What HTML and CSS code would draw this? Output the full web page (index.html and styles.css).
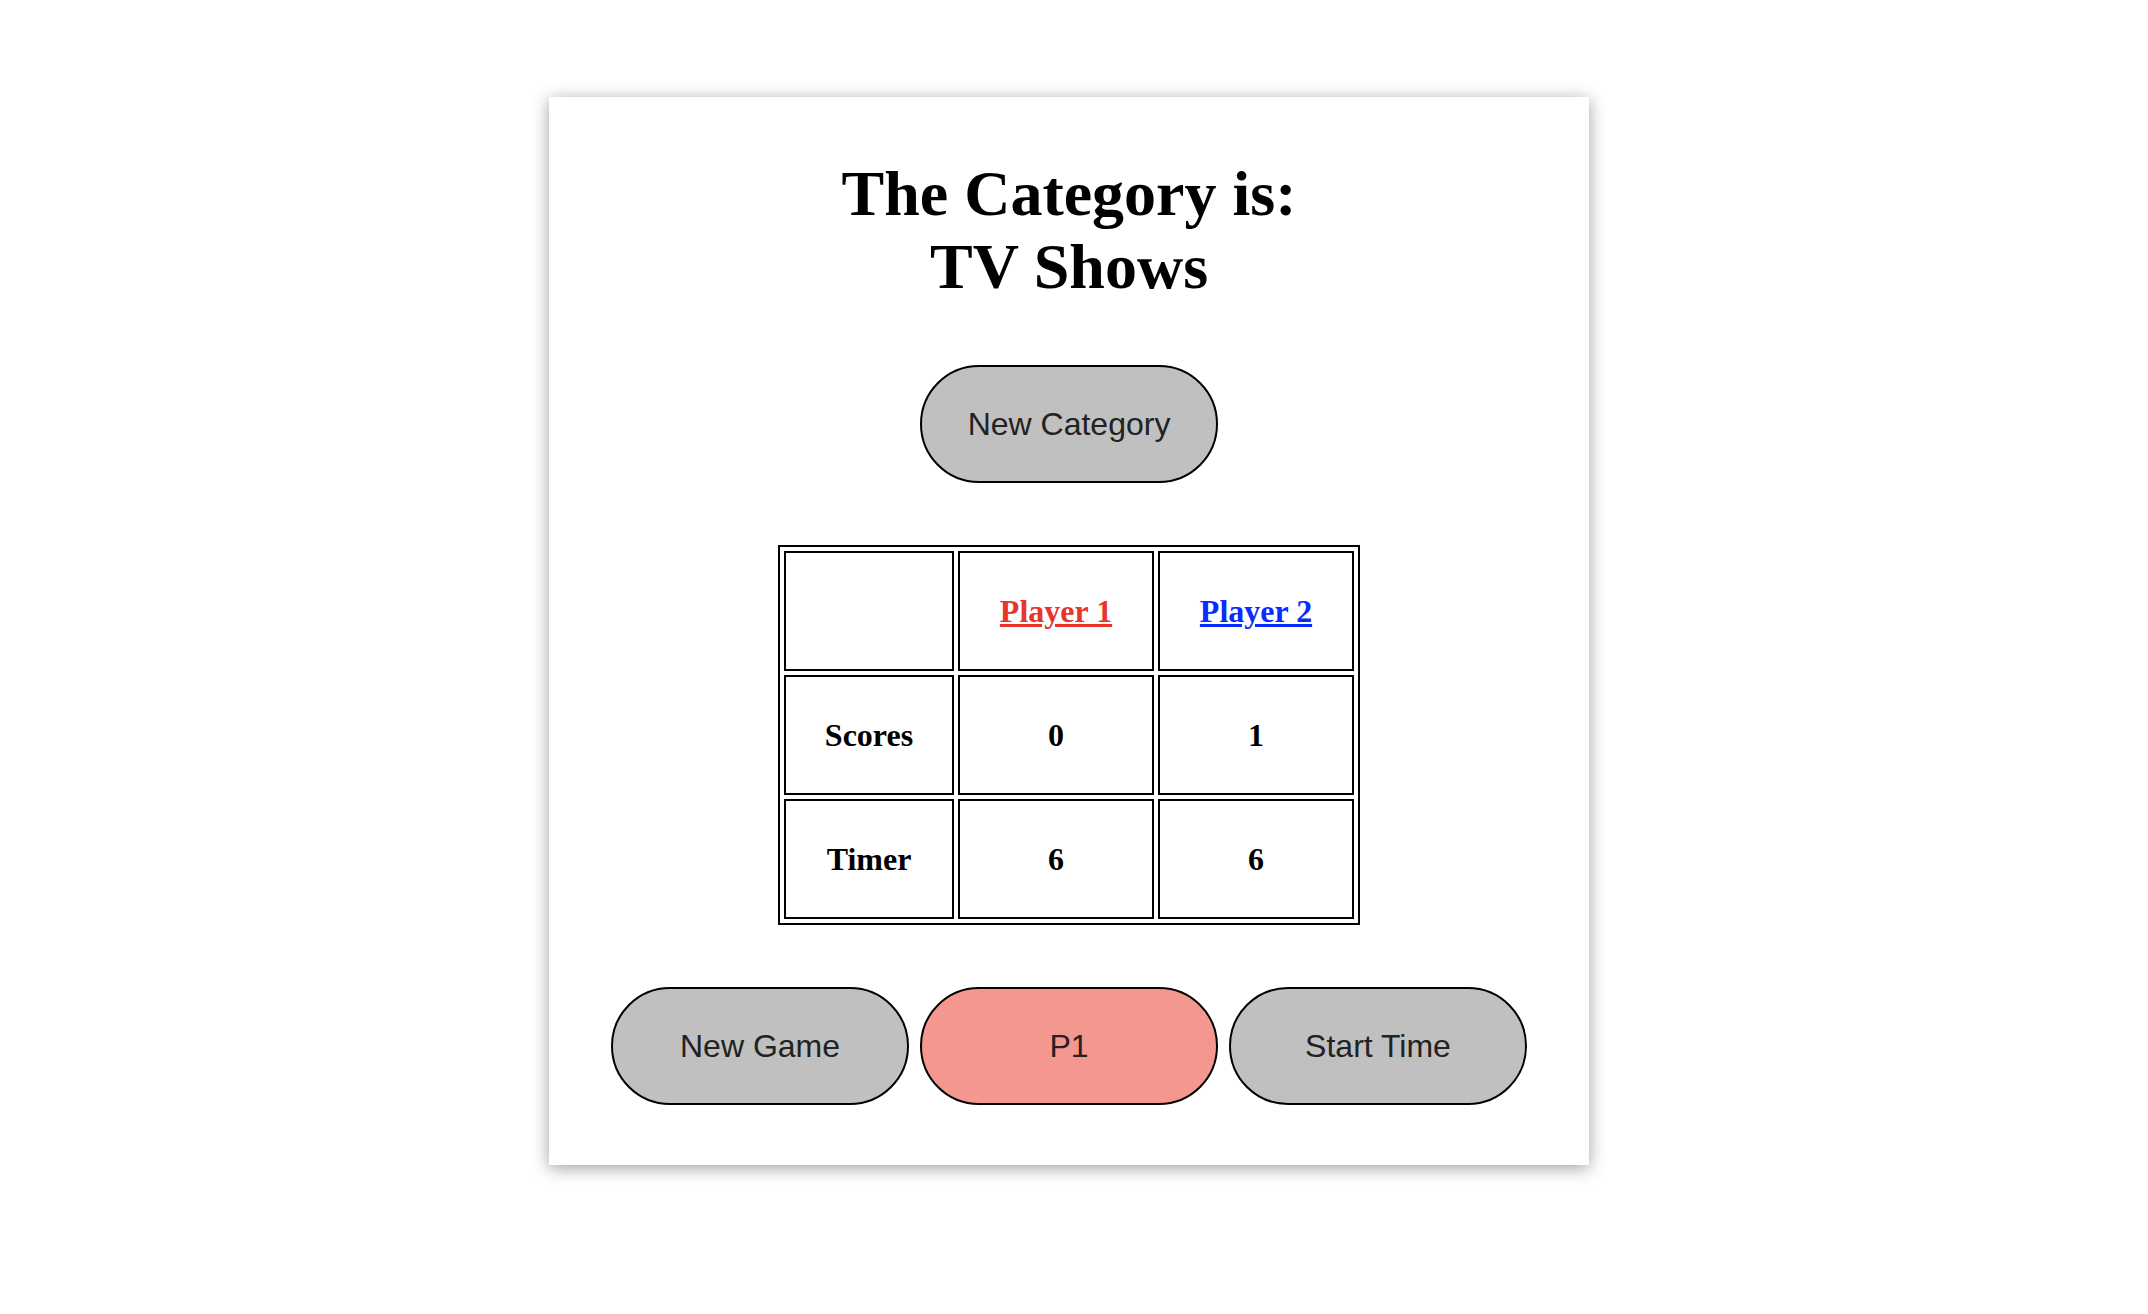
FILE: index.html
```html
<!DOCTYPE html>
<html>
<head>
<meta charset="utf-8">
<link rel="stylesheet" href="styles.css">
</head>
<body>
<div class="card">
  <h1 class="title">The Category is:<br>TV Shows</h1>
  <button class="btn">New Category</button>
  <table class="score">
    <tr>
      <th></th>
      <th><a class="p1" href="#">Player 1</a></th>
      <th><a class="p2" href="#">Player 2</a></th>
    </tr>
    <tr>
      <th>Scores</th>
      <th>0</th>
      <th>1</th>
    </tr>
    <tr>
      <th>Timer</th>
      <th>6</th>
      <th>6</th>
    </tr>
  </table>
  <div class="row">
    <button class="btn">New Game</button>
    <button class="btn btn-red">P1</button>
    <button class="btn">Start Time</button>
  </div>
</div>
</body>
</html>
```
FILE: styles.css
```css
html, body {
  margin: 0;
  padding: 0;
  background: #ffffff;
}
body {
  padding-top: 97px;
  min-height: 1314px;
  box-sizing: border-box;
  font-family: "Liberation Serif", "Times New Roman", serif;
}
.card {
  width: 1040px;
  height: 1068px;
  box-sizing: border-box;
  margin-left: 549px;
  background: #fff;
  box-shadow: 0 3px 16px rgba(0, 0, 0, 0.38);
  display: flex;
  flex-direction: column;
  align-items: center;
  padding-top: 60px;
  gap: 62px;
}
.title {
  margin: 0;
  font-family: "Liberation Serif", "Times New Roman", serif;
  font-weight: bold;
  font-size: 64px;
  line-height: 73px;
  text-align: center;
  color: #000;
}
.btn {
  width: 298px;
  height: 118px;
  border: 2px solid #000;
  border-radius: 60px;
  background: #c0c0c0;
  color: #222;
  font-family: "Liberation Sans", Arial, sans-serif;
  font-size: 32px;
  padding: 0;
  margin: 0;
}
.btn-red {
  background: #f4988f;
}
.score {
  border: 2px solid #000;
  border-spacing: 4px;
  border-collapse: separate;
}
.score th {
  border: 2px solid #000;
  font-family: "Liberation Serif", "Times New Roman", serif;
  font-weight: bold;
  font-size: 32px;
  line-height: 36px;
  padding: 40px 0;
  text-align: center;
  color: #000;
}
.score th:first-child {
  width: 166px;
}
.score th:nth-child(2),
.score th:nth-child(3) {
  width: 192px;
}
.p1 {
  color: #e8352b;
  text-decoration: underline;
  text-decoration-thickness: 3px;
}
.p2 {
  color: #0a2bff;
  text-decoration: underline;
  text-decoration-thickness: 3px;
}
.row {
  display: flex;
  gap: 11px;
}
```
